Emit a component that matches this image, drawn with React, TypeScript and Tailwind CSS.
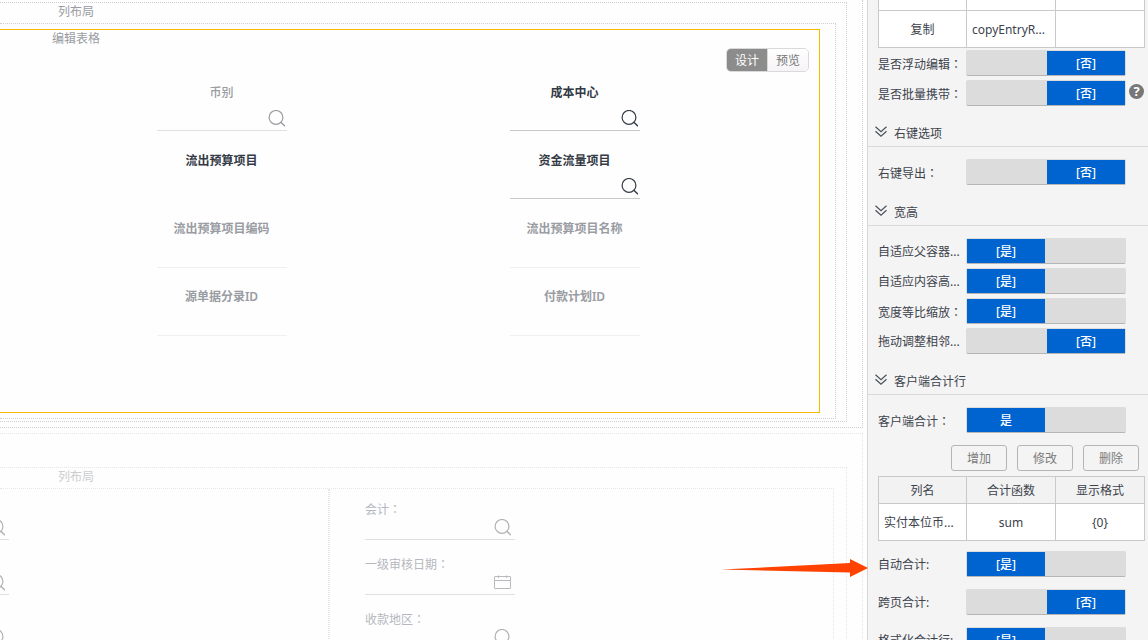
import React, { useId, useState } from "react";

function Colon() {
  return <span className="font-['Noto_Sans_CJK_TC',sans-serif]">：</span>;
}

function SearchIcon({ className }: { className: string }) {
  return (
    <svg width="17" height="17" viewBox="0 0 17 17" fill="none" stroke="currentColor" className={className} aria-hidden="true">
      <circle cx="8" cy="7.4" r="6.9" strokeWidth="1.2" />
      <path d="M12.6 12 L17 16.2" strokeWidth="1.4" />
    </svg>
  );
}

function CalendarIcon({ className }: { className: string }) {
  return (
    <svg width="17" height="17" viewBox="0 0 17 17" fill="none" stroke="currentColor" className={className} aria-hidden="true">
      <rect x="0.5" y="2.5" width="16" height="12" rx="0.5" />
      <path d="M0.5 6.5 H16.5 M4.5 1.5 V4 M12.5 1.5 V4" />
    </svg>
  );
}

function ChevronsIcon() {
  return (
    <svg width="12" height="12" viewBox="0 0 12 12" fill="none" stroke="currentColor" strokeWidth="1.2" className="shrink-0 text-[#4a505a]" aria-hidden="true">
      <path d="M0.5 0.8 L6 5.8 L11.5 0.8 M0.5 5.3 L6 10.3 L11.5 5.3" />
    </svg>
  );
}

type Column = { name: string; tone: "strong" | "muted" | "faint"; field: boolean; search?: boolean };

const columns: Column[] = [
  { name: "币别", tone: "muted", field: true, search: true },
  { name: "成本中心", tone: "strong", field: true, search: true },
  { name: "流出预算项目", tone: "strong", field: false },
  { name: "资金流量项目", tone: "strong", field: true, search: true },
  { name: "流出预算项目编码", tone: "faint", field: true },
  { name: "流出预算项目名称", tone: "faint", field: true },
  { name: "源单据分录ID", tone: "faint", field: true },
  { name: "付款计划ID", tone: "faint", field: true },
];

const labelTone = { strong: "font-bold text-[#333a45]", muted: "font-medium text-[#999ca2]", faint: "font-semibold text-[#999ca2]" };
const lineTone = { strong: "h-7 border-[#c8c9cb]", muted: "h-7 border-[#dfe0e1]", faint: "h-[29px] border-[#f0f0f1]" };

function GridField({ column }: { column: Column }) {
  const id = useId();
  return (
    <div className="flex h-[68px] flex-col items-center pt-1">
      <label htmlFor={column.field ? id : undefined} className={`h-5 leading-5 ${labelTone[column.tone]}`}>
        {column.name}
      </label>
      {column.field && (
        <div className={`flex w-[130px] items-end border-b pr-[2px] pb-[3px] ${lineTone[column.tone]}`}>
          <input id={id} className="min-w-0 flex-1 bg-transparent outline-none" />
          {column.search && <SearchIcon className={column.tone === "strong" ? "text-[#333a45]" : "text-[#999ca2]"} />}
        </div>
      )}
    </div>
  );
}

function FormField({ name, icon = "search" }: { name?: string; icon?: "search" | "date" }) {
  const id = useId();
  return (
    <div className="h-[55px] w-[150px] text-[#b5b8be]">
      <label htmlFor={id} className="block h-5 leading-5">
        {name}
        {name && <Colon />}
      </label>
      <div className="flex h-[21px] items-end border-b border-[#dfe0e1] pr-1 pb-[3px]">
        <input id={id} className="min-w-0 flex-1 bg-transparent outline-none" />
        {icon === "search" ? <SearchIcon className="text-[#b0b1b4]" /> : <CalendarIcon className="text-[#b8b9bb]" />}
      </div>
    </div>
  );
}

function Designer() {
  return (
    <main className="min-w-0 flex-1 overflow-hidden bg-[#fefefe] pr-1">
      <section className="border-r border-b border-dotted border-[#cfcfcf] pt-[2px] pr-[15px] pb-[5px]">
        <div className="border-y border-r border-dotted border-[#cfcfcf] pr-[10px] pb-[2px]">
          <h2 className="h-5 pl-[58px] leading-[18px] text-[#999ca2]">列布局</h2>
          <div className="border-y border-r border-dotted border-[#cfcfcf] py-[5px] pr-[15px]">
            <div className="border-y border-r border-[#fbb800] pb-[61px]">
              <div className="flex h-[49px] justify-between pr-[10px]">
                <h3 className="pl-[52px] leading-[18px] text-[#999ca2]">编辑表格</h3>
                <div className="mt-[18px] flex h-6 overflow-hidden rounded-[5px] border border-[#d9d9d9]">
                  <button className="w-10 bg-[#8c8c8c] leading-6 text-white">设计</button>
                  <button className="w-[41px] border-l border-[#d9d9d9] bg-linear-to-b from-white to-[#f6f3f6] leading-6 text-[#777]">预览</button>
                </div>
              </div>
              <div className="grid grid-cols-[353px_353px] pl-[45px]">
                {columns.map((c) => (
                  <GridField key={c.name} column={c} />
                ))}
              </div>
            </div>
          </div>
        </div>
      </section>
      <section className="mt-[5px] h-screen border-t border-r border-dotted border-[#e6e6e6] pt-[33px] pr-[15px]">
        <div className="h-full border-t border-r border-dotted border-[#e6e6e6] pr-3">
          <h2 className="h-5 pl-[58px] leading-[18px] text-[#cccdd0]">列布局</h2>
          <div className="flex h-full border-t border-r border-dotted border-[#e6e6e6]">
            <div className="flex w-[329px] shrink-0 flex-col border-r border-dotted border-[#e6e6e6] pt-[10px]">
              <div className="-ml-[141px]">
                <FormField />
                <FormField />
                <FormField />
              </div>
            </div>
            <div className="min-w-0 flex-1 border-l border-dotted border-[#e6e6e6] pt-[10px] pl-[35px]">
              <FormField name="会计" />
              <FormField name="一级审核日期" icon="date" />
              <FormField name="收款地区" />
            </div>
          </div>
        </div>
      </section>
    </main>
  );
}

type SettingProps = { name: string; initial: boolean; brackets?: boolean; colon?: "wide" | "narrow" | "none"; tall?: boolean; help?: boolean };

function Setting({ name, initial, brackets = true, colon = "wide", tall = false, help = false }: SettingProps) {
  const id = useId();
  const [on, setOn] = useState(initial);
  const word = on ? "是" : "否";
  return (
    <div className={`flex items-center pl-[10px] ${tall ? "h-[38px]" : "h-[30px]"}`}>
      <label htmlFor={id} className="w-[88px] shrink-0 pt-[2px] whitespace-nowrap">
        {name}
        {colon === "wide" && <Colon />}
        {colon === "narrow" && ":"}
      </label>
      <button
        id={id}
        role="switch"
        aria-checked={on}
        onClick={() => setOn(!on)}
        className={`flex h-[26px] w-40 rounded-xs border border-[#dcdcdc] border-b-[#b5b5b5] bg-[#dcdcdc] ${on ? "justify-start" : "justify-end"}`}
      >
        <span className="h-6 w-[78px] bg-[#0064d0] pt-px text-center leading-6 font-medium text-white">{brackets ? `[${word}]` : word}</span>
      </button>
      {help && (
        <button aria-label="帮助" className="mb-1 ml-[3px] flex size-[15px] items-center justify-center rounded-full bg-[#777] text-[13px] leading-none font-bold text-white">
          ?
        </button>
      )}
    </div>
  );
}

function GroupTitle({ children }: { children: React.ReactNode }) {
  return (
    <h2 className="flex h-[39px] items-end gap-[7px] border-b border-[#dadada] pb-[2px] pl-[7px] leading-5">
      <span className="pb-[6px]">
        <ChevronsIcon />
      </span>
      {children}
    </h2>
  );
}

const cell = "border border-[#c9c9c9] p-0 pt-px text-center font-normal";
const longCell = "border border-[#c9c9c9] p-0 pt-px pl-[5px] text-left font-normal whitespace-nowrap";

function Cols() {
  return (
    <colgroup>
      <col className="w-[88px]" />
      <col className="w-[89px]" />
      <col />
    </colgroup>
  );
}

function Properties() {
  return (
    <aside className="w-[281px] shrink-0 overflow-hidden border-l border-[#d6d6d6] bg-[#f4f4f4] text-[#3c424c]">
      <div className="-mt-[27px] pr-[3px] pl-[10px]">
        <table className="w-full table-fixed border-collapse bg-white">
          <Cols />
          <tbody>
            <tr className="h-[37px]">
              <td className={cell} />
              <td className={cell} />
              <td className={cell} />
            </tr>
            <tr className="h-[37px]">
              <td className={cell}>复制</td>
              <td className={longCell}>copyEntryR...</td>
              <td className={cell} />
            </tr>
          </tbody>
        </table>
      </div>
      <Setting name="是否浮动编辑" initial={false} />
      <Setting name="是否批量携带" initial={false} help />
      <GroupTitle>右键选项</GroupTitle>
      <div className="pt-[10px]">
        <Setting name="右键导出" initial={false} />
      </div>
      <GroupTitle>宽高</GroupTitle>
      <div className="pt-[10px]">
        <Setting name="自适应父容器..." initial={true} colon="none" />
        <Setting name="自适应内容高..." initial={true} colon="none" />
        <Setting name="宽度等比缩放" initial={true} />
        <Setting name="拖动调整相邻..." initial={false} colon="none" />
      </div>
      <GroupTitle>客户端合计行</GroupTitle>
      <div className="pt-[10px]">
        <Setting name="客户端合计" initial={true} brackets={false} />
      </div>
      <div className="flex justify-end gap-[10px] pt-[10px] pr-[9px] pb-[5px]">
        {["增加", "修改", "删除"].map((action) => (
          <button key={action} className="h-[26px] w-14 rounded-[3px] border border-[#b5b5b5] pt-px leading-6 text-[#7b7b7b]">
            {action}
          </button>
        ))}
      </div>
      <div className="pr-[3px] pb-1 pl-[10px]">
        <table className="w-full table-fixed border-collapse bg-white">
          <Cols />
          <thead>
            <tr className="h-[27px] bg-[#f2f2f2]">
              <th className={cell}>列名</th>
              <th className={cell}>合计函数</th>
              <th className={cell}>显示格式</th>
            </tr>
          </thead>
          <tbody>
            <tr className="h-[37px]">
              <td className={longCell}>实付本位币...</td>
              <td className={cell}>sum</td>
              <td className={cell}>{"{0}"}</td>
            </tr>
          </tbody>
        </table>
      </div>
      <Setting name="自动合计" initial={true} colon="narrow" tall />
      <Setting name="跨页合计" initial={false} colon="narrow" tall />
      <Setting name="格式化合计行" initial={true} colon="narrow" tall />
    </aside>
  );
}

export default function App() {
  return (
    <div className="relative flex h-screen overflow-hidden font-['Noto_Sans','Noto_Sans_CJK_SC',sans-serif] text-[12px] leading-5">
      <Designer />
      <Properties />
      <svg width="147" height="20" viewBox="0 0 147 20" className="pointer-events-none absolute top-[558px] right-[280px]" aria-hidden="true">
        <path d="M0 11.6 L129 5 V1 L147 10 L129 19 V14.5 Z" fill="#ff4200" />
      </svg>
    </div>
  );
}
